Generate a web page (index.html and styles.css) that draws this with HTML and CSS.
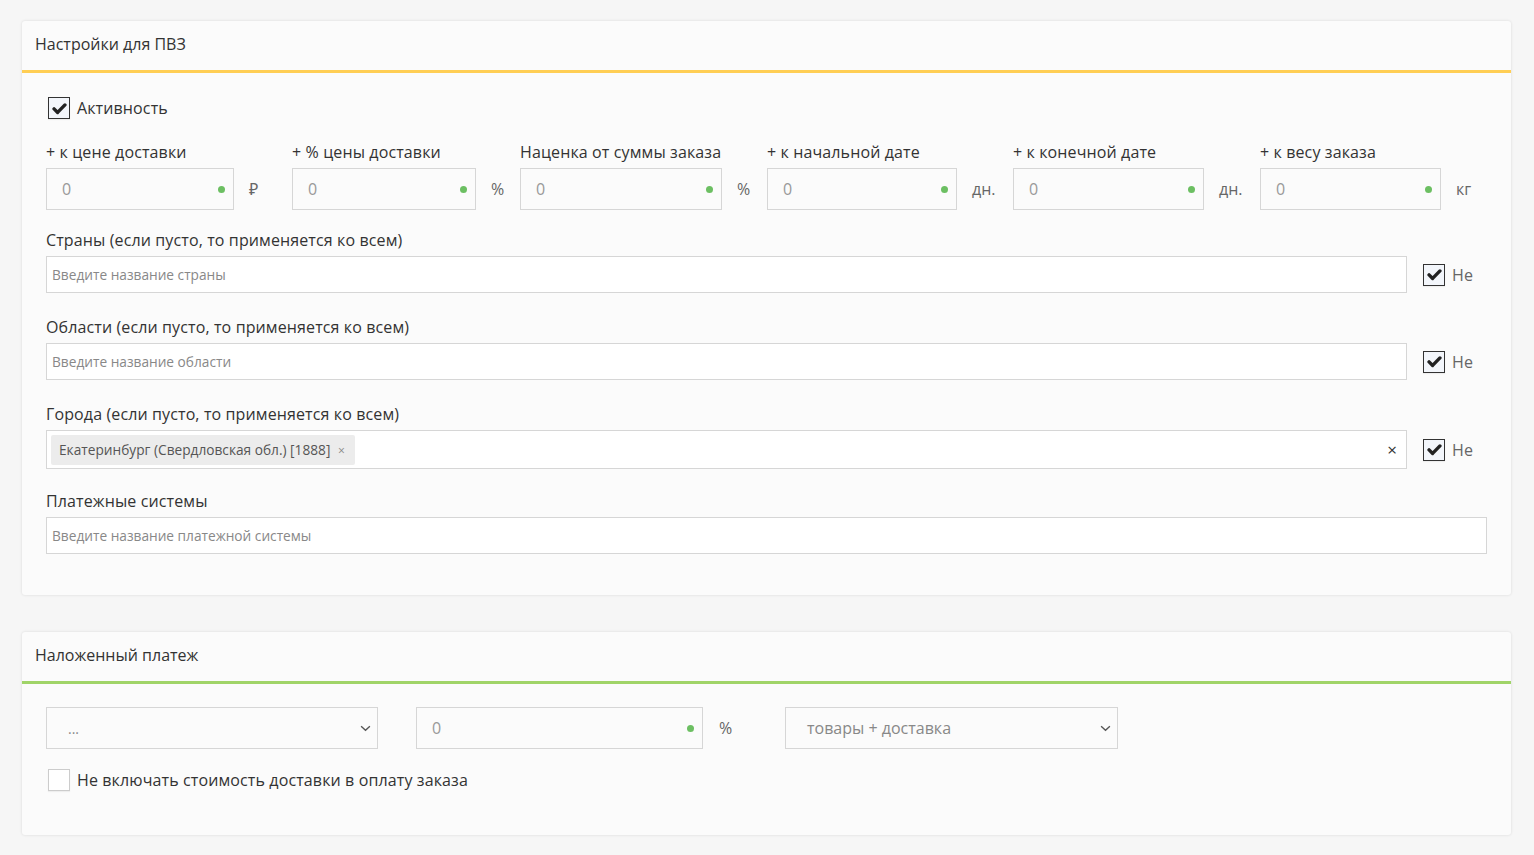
FILE: index.html
```html
<!DOCTYPE html>
<html lang="ru">
<head>
    <meta charset="UTF-8">
    <meta name="viewport" content="width=device-width, initial-scale=1.0">
    <title>Настройки для ПВЗ</title>
    <link rel="stylesheet" href="styles.css">
</head>
<body>
    <div class="page">
        <div class="card">
            <div class="card-header card-header-yellow">Настройки для ПВЗ</div>
            <div class="card-body">
                <label class="check">
                    <span class="check-box checked"><svg viewBox="0 0 16 16" width="15" height="15"><path d="M2.2 8.4 L6 12.2 L13.8 4.2" fill="none" stroke="#222" stroke-width="3.6" stroke-linecap="round" stroke-linejoin="round"/></svg></span>
                    <span class="check-text">Активность</span>
                </label>

                <div class="markup-grid">
                    <div class="field-label">+ к цене доставки</div>
                    <div class="field-label">+ % цены доставки</div>
                    <div class="field-label">Наценка от суммы заказа</div>
                    <div class="field-label">+ к начальной дате</div>
                    <div class="field-label">+ к конечной дате</div>
                    <div class="field-label">+ к весу заказа</div>

                    <div class="num-input"><span>0</span><i class="dot"></i></div>
                    <div class="unit">₽</div>
                    <div class="num-input"><span>0</span><i class="dot"></i></div>
                    <div class="unit">%</div>
                    <div class="num-input"><span>0</span><i class="dot"></i></div>
                    <div class="unit">%</div>
                    <div class="num-input"><span>0</span><i class="dot"></i></div>
                    <div class="unit">дн.</div>
                    <div class="num-input"><span>0</span><i class="dot"></i></div>
                    <div class="unit">дн.</div>
                    <div class="num-input"><span>0</span><i class="dot"></i></div>
                    <div class="unit">кг</div>
                </div>

                <div class="form-group">
                    <div class="field-label">Страны (если пусто, то применяется ко всем)</div>
                    <div class="tag-row">
                        <div class="tag-input">Введите название страны</div>
                        <label class="check check-not">
                            <span class="check-box checked"><svg viewBox="0 0 16 16" width="15" height="15"><path d="M2.2 8.4 L6 12.2 L13.8 4.2" fill="none" stroke="#222" stroke-width="3.6" stroke-linecap="round" stroke-linejoin="round"/></svg></span>
                            <span class="check-text muted">Не</span>
                        </label>
                    </div>
                </div>

                <div class="form-group">
                    <div class="field-label">Области (если пусто, то применяется ко всем)</div>
                    <div class="tag-row">
                        <div class="tag-input">Введите название области</div>
                        <label class="check check-not">
                            <span class="check-box checked"><svg viewBox="0 0 16 16" width="15" height="15"><path d="M2.2 8.4 L6 12.2 L13.8 4.2" fill="none" stroke="#222" stroke-width="3.6" stroke-linecap="round" stroke-linejoin="round"/></svg></span>
                            <span class="check-text muted">Не</span>
                        </label>
                    </div>
                </div>

                <div class="form-group">
                    <div class="field-label">Города (если пусто, то применяется ко всем)</div>
                    <div class="tag-row">
                        <div class="tag-input has-tags">
                            <span class="tag">Екатеринбург (Свердловская обл.) [1888] <b>×</b></span>
                            <span class="clear">×</span>
                        </div>
                        <label class="check check-not">
                            <span class="check-box checked"><svg viewBox="0 0 16 16" width="15" height="15"><path d="M2.2 8.4 L6 12.2 L13.8 4.2" fill="none" stroke="#222" stroke-width="3.6" stroke-linecap="round" stroke-linejoin="round"/></svg></span>
                            <span class="check-text muted">Не</span>
                        </label>
                    </div>
                </div>

                <div class="form-group form-group-last">
                    <div class="field-label">Платежные системы</div>
                    <div class="tag-input">Введите название платежной системы</div>
                </div>
            </div>
        </div>

        <div class="card">
            <div class="card-header card-header-green">Наложенный платеж</div>
            <div class="card-body card-body-cod">
                <div class="cod-row">
                    <div class="select select-payment"><span class="dots">...</span><svg viewBox="0 0 12 8" width="11" height="7"><path d="M1 1.5 L6 6 L11 1.5" fill="none" stroke="#555" stroke-width="1.6"/></svg></div>
                    <div class="num-input cod-input"><span>0</span><i class="dot"></i></div>
                    <div class="unit unit-cod">%</div>
                    <div class="select select-base"><span>товары + доставка</span><svg viewBox="0 0 12 8" width="11" height="7"><path d="M1 1.5 L6 6 L11 1.5" fill="none" stroke="#555" stroke-width="1.6"/></svg></div>
                </div>
                <label class="check">
                    <span class="check-box"></span>
                    <span class="check-text">Не включать стоимость доставки в оплату заказа</span>
                </label>
            </div>
        </div>
    </div>
</body>
</html>
```

FILE: styles.css
```css
body {
    margin: 0;
    background-color: #f6f6f6;
    font-family: "Open Sans", "Noto Sans", sans-serif;
    color: #333;
}

.page {
    padding: 21px 23px 20px 22px;
}

.card {
    background-color: #fbfbfb;
    border-radius: 3px;
    box-shadow: 0 0 3px rgba(0, 0, 0, 0.12);
    margin-bottom: 37px;
}

.card-header {
    height: 49px;
    line-height: 47px;
    padding-left: 13px;
    font-size: 16px;
    color: #333;
}

.card-header-yellow {
    border-bottom: 3px solid #ffce54;
}

.card-header-green {
    border-bottom: 3px solid #a0d468;
}

.card-body {
    padding: 24px 24px 41px 24px;
}

.card-body-cod {
    padding-top: 23px;
    padding-bottom: 44px;
}

/* checkboxes */
.check {
    display: flex;
    align-items: center;
    height: 22px;
    margin-left: 2px;
}

.check-box {
    width: 20px;
    height: 20px;
    border: 1px solid #ccc;
    background-color: #fff;
    display: flex;
    align-items: center;
    justify-content: center;
    box-shadow: 0 1px 1px rgba(0, 0, 0, 0.05);
}

.check-box.checked {
    border-color: #333;
    background-color: #f3f6fb;
}

.check-text {
    margin-left: 7px;
    font-size: 16px;
    letter-spacing: 0.12px;
    color: #333;
}

.check-text.muted {
    color: #666;
}

/* markup fields */
.markup-grid {
    display: grid;
    grid-template-columns: 188px 58px 184px 44px 202px 45px 190px 56px 191px 56px 181px 46px;
    margin-top: 23px;
}

.markup-grid .field-label {
    grid-column: span 2;
}

.field-label {
    font-size: 16px;
    line-height: 20px;
    letter-spacing: 0.12px;
    color: #333;
    margin-bottom: 6px;
}

.num-input {
    height: 42px;
    box-sizing: border-box;
    border: 1px solid #d6d6d6;
    background-color: #fbfbfb;
    display: flex;
    align-items: center;
    justify-content: space-between;
    padding: 0 8px 0 15px;
    font-size: 16px;
    color: #999;
}

.dot {
    width: 7px;
    height: 7px;
    border-radius: 50%;
    background-color: #6cbf62;
}

.unit {
    display: flex;
    align-items: center;
    padding-left: 15px;
    font-size: 16px;
    color: #666;
}

/* tag inputs */
.form-group {
    margin-top: 24px;
}

.markup-grid + .form-group {
    margin-top: 20px;
}

.form-group-last {
    margin-top: 22px;
}

.tag-row {
    display: flex;
    align-items: center;
}

.tag-input {
    flex: 1;
    min-height: 37px;
    box-sizing: border-box;
    border: 1px solid #d6d6d6;
    background-color: #fff;
    display: flex;
    align-items: center;
    padding-left: 5px;
    font-size: 13.7px;
    color: #888;
}

.tag-input.has-tags {
    min-height: 39px;
    padding-left: 4px;
    padding-right: 9px;
    justify-content: space-between;
}

.tag {
    background-color: #ececec;
    color: #555;
    font-size: 13.7px;
    height: 30px;
    line-height: 30px;
    padding: 0 10px 0 8px;
    border-radius: 2px;
}

.tag b {
    font-weight: normal;
    color: #888;
    font-size: 12px;
    margin-left: 4px;
}

.clear {
    color: #333;
    font-size: 17px;
}

.check-not {
    width: 64px;
    margin-left: 16px;
    flex-shrink: 0;
}

/* cash on delivery */
.cod-row {
    display: flex;
    align-items: stretch;
    height: 42px;
    margin-bottom: 20px;
}

.select {
    box-sizing: border-box;
    border: 1px solid #d6d6d6;
    background-color: #fbfbfb;
    display: flex;
    align-items: center;
    justify-content: space-between;
    padding: 0 6px 0 21px;
    font-size: 16px;
    color: #888;
}

.select-payment {
    width: 332px;
}

.select-payment .dots {
    font-size: 14px;
}

.select-base {
    width: 333px;
}

.cod-input {
    width: 287px;
    margin-left: 38px;
}

.unit-cod {
    width: 82px;
    box-sizing: border-box;
    padding-left: 16px;
}
```
